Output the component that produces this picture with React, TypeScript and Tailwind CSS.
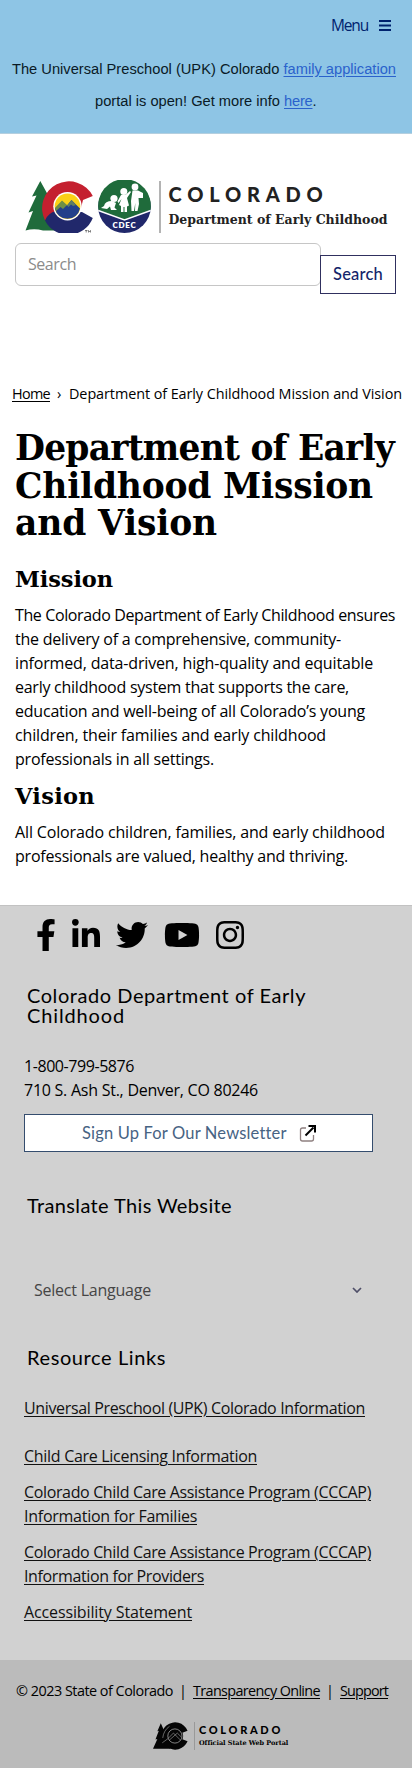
import { useLayoutEffect, useRef, useState } from 'react';
import { FaFacebookF, FaInstagram, FaLinkedinIn, FaTwitter, FaYoutube } from 'react-icons/fa';

/** A line of text whose letter spacing is set so that it fills the given width. */
function Line({ text, width, className = '' }: { text: string; width: number; className?: string }) {
  const ref = useRef<HTMLSpanElement>(null);
  const [spacing, setSpacing] = useState(0);
  useLayoutEffect(() => {
    const el = ref.current;
    if (el) setSpacing((width - el.getBoundingClientRect().width) / text.length);
  }, []);
  return (
    <span ref={ref} className={`inline-block whitespace-pre ${className}`} style={{ letterSpacing: `${spacing}px` }}>
      {text}
    </span>
  );
}

function Paragraph({ lines }: { lines: [string, number][] }) {
  return (
    <p className="flex flex-col items-start text-base leading-6">
      {lines.map(([text, width]) => (
        <Line key={text} text={text} width={width} />
      ))}
    </p>
  );
}

function FooterLink({ lines }: { lines: [string, number][] }) {
  return (
    <a href="#" className="flex flex-col items-start leading-6 text-[#111]">
      {lines.map(([text, width]) => (
        <Line key={text} text={text} width={width} className="underline decoration-1 underline-offset-[1.5px]" />
      ))}
    </a>
  );
}

function ColoradoLogo() {
  return (
    <svg viewBox="25 10 131 53" className="h-[53px] w-[131px] shrink-0">
      <path
        d="M40.300 11 L32 26.500 L36.500 25.500 L28.500 42.500 L33 41 L25.500 60.500 Q34 58 43 60.500 L56 60.500 L56 30 L48 25 Z"
        fill="#1f6b3b"
      />
      <path d="M92.800 26 A26.200 26.200 0 1 0 45 50.400 L58 46 L81 38 L83 30 Z" fill="#c4202f" />
      <path d="M45 50.400 A26.200 26.200 0 0 0 92.800 48 L82 42 L66 42 L56 41 Q48 43 45 50.400Z" fill="#21286b" />
      <circle cx="67.500" cy="36.300" r="14.200" fill="#fff" />
      <circle cx="67.500" cy="36.300" r="12.800" fill="#fbd116" />
      <path d="M54.900 38.500 L62 31.500 L67 35.500 L71.500 30 L80 38.500 A12.800 12.800 0 0 1 54.900 38.500Z" fill="#23408a" />
      <path d="M55 38 L62 30.500 L67 35 L63 39 L60.500 37 L56 41Z" fill="#6f8f45" />
      <path d="M67 35.500 L71.500 30 L76 35 L73 36 L71 34.500 L68.500 37Z" fill="#5f7d62" />
      <path d="M85 60.500 h2.500 M86.200 60.500 v2 M88.500 62.500 v-2 l1 1.200 l1-1.200 v2" stroke="#333" strokeWidth=".6" fill="none" />
      <circle cx="124.500" cy="36.700" r="26.300" fill="#21286b" />
      <path d="M98.600 40 A26.300 26.300 0 1 1 150.400 40 L124.500 49.500Z" fill="#1f6b3b" />
      <path d="M98.300 40.500 L124.500 50 L150.700 40.500" stroke="#fff" strokeWidth="1.400" fill="none" />
      <g fill="#fff">
        <circle cx="114" cy="28.500" r="3.600" />
        <path d="M112 31 Q105 31 104 36 L101 38 L107 39 L110 36.500 L111 40 H117 L114.500 37.500 L116 33Z" />
        <circle cx="123.800" cy="21.500" r="3.500" />
        <path d="M121 25 L126 24.500 L130 21 L131 22 L127 28 L129 35.500 L127 36.500 L127 42 H124.500 V37 H123.500 V42 H121 V36 L119 35 L121.500 29 L118.500 33 L117.500 31.500Z" />
        <circle cx="135" cy="17" r="3.400" />
        <path d="M132.500 20.500 H138 L143 23 V28 H138.500 L139 34 L137.500 41 H135 L135.300 33 L134 41 H131.500 L131 31Z" />
      </g>
      <text
        x="124.500" y="58" textAnchor="middle" fontSize="8" fontWeight="800" letterSpacing=".7" fill="#fff"
        className="font-['Lato',sans-serif]"
      >
        CDEC
      </text>
    </svg>
  );
}

function PortalLogo() {
  return (
    <svg viewBox="0 0 38 28" className="h-7 w-[37px] shrink-0">
      <path d="M8 1 L4.500 9 L6 8.500 L2.500 17.500 L4.500 17 L0 27 H18 V12 L13 12Z" fill="#050505" />
      <path d="M35.500 8.500 A14 14 0 1 0 35.500 19.500 L29.500 17 A7.500 7.500 0 1 1 29.500 11Z" fill="#050505" />
      <circle cx="22.500" cy="14" r="8.500" fill="#050505" />
      <circle cx="22.500" cy="14" r="7.300" fill="none" stroke="#bcbcbc" strokeWidth=".7" />
      <path d="M10 16 Q11 8 17 4 M9.500 21 L15 17 L21 11 L28 18 M17 18 L25 11 L29 15" fill="none" stroke="#aaa" strokeWidth=".6" />
    </svg>
  );
}

export default function App() {
  return (
    <div className="w-[412px] bg-white font-['Open_Sans','Noto_Sans',sans-serif] text-black">
      <header className="h-[134px] border-b border-[#b4cfdf] bg-[#8ec5e5] pt-[13px]">
        <button className="ml-auto mr-[21px] flex h-6 items-center gap-[11px] text-[15.5px] leading-6 text-[#00226e]">
          <Line text="Menu" width={37} />
          <svg viewBox="0 0 12 11" className="h-[11px] w-3">
            <path d="M0 1h12M0 5.500h12M0 10h12" stroke="#00226e" strokeWidth="1.800" />
          </svg>
        </button>
        <div className="mt-4 pl-3 font-['Liberation_Sans',Arial,sans-serif] text-[14.67px] leading-8 text-[#0a1a26]">
          <div className="flex">
            <Line text="The Universal Preschool (UPK) Colorado " width={271.5} />
            <a href="#">
              <Line text="family application" width={112.5} className="text-[#2a62cc] underline underline-offset-2" />
            </a>
          </div>
          <div className="flex pl-[83px]">
            <Line text="portal is open! Get more info " width={189} />
            <a href="#">
              <Line text="here" width={28.5} className="text-[#2a62cc] underline underline-offset-2" />
            </a>
            <span>.</span>
          </div>
        </div>
      </header>

      <section className="h-[248px] pt-[46px]">
        <div className="flex h-[54px] items-start pl-[25px]">
          <ColoradoLogo />
          <div className="ml-[3px] mt-px h-[52px] w-[1.500px] bg-[#b3b3b3]" />
          <div className="ml-[8px] flex flex-col items-start text-[#222]">
            <Line
              text="COLORADO"
              width={160}
              className="h-7 font-['Lato',sans-serif] text-[20px] font-black leading-7"
            />
            <Line
              text="Department of Early Childhood"
              width={219}
              className="mt-[2px] h-5 font-['DejaVu_Serif',serif] text-[12.5px] font-bold leading-5"
            />
          </div>
        </div>
        <form className="mt-[9px] flex items-start pl-[15px] font-['Lato',sans-serif]">
          <div className="h-[43px] w-[306px] rounded-md border-[1.500px] border-[#c6c6c6] pl-[12px] font-['Open_Sans',sans-serif] text-base leading-[40px] text-[#8b8b8b]">
            <Line text="Search" width={48} />
          </div>
          <button
            type="button"
            className="mt-3 -ml-px flex h-[39px] w-[76px] items-center justify-center border border-[#30305f] text-[16.5px] font-medium text-[#14246a]"
          >
            <Line text="Search" width={50} />
          </button>
        </form>
      </section>

      <main className="h-[523px]">
        <nav className="flex pl-3 text-[14.4px] leading-6">
          <a href="#">
            <Line text="Home" width={38} className="underline underline-offset-2" />
          </a>
          <span className="w-[19px] pl-[7px]">›</span>
          <Line text="Department of Early Childhood Mission and Vision" width={333} />
        </nav>
        <div className="pl-[15px]">
          <h1 className="mt-6 flex flex-col items-start font-['DejaVu_Serif',serif] text-[34.5px] font-bold leading-[37.500px]">
            <Line text="Department of Early" width={379} />
            <Line text="Childhood Mission" width={358} />
            <Line text="and Vision" width={202} />
          </h1>
          <h2 className="mt-[24.500px] h-6 font-['DejaVu_Serif',serif] text-[22.5px] font-bold leading-6">
            <Line text="Mission" width={98} />
          </h2>
          <div className="mt-3">
            <Paragraph
              lines={[
                ['The Colorado Department of Early Childhood ensures', 380],
                ['the delivery of a comprehensive, community-', 326],
                ['informed, data-driven, high-quality and equitable', 358],
                ['early childhood system that supports the care,', 334],
                ['education and well-being of all Colorado’s young', 350],
                ['children, their families and early childhood', 311],
                ['professionals in all settings.', 199],
              ]}
            />
          </div>
          <h2 className="mt-[13px] h-6 font-['DejaVu_Serif',serif] text-[22.5px] font-bold leading-6">
            <Line text="Vision" width={80} />
          </h2>
          <div className="mt-3">
            <Paragraph
              lines={[
                ['All Colorado children, families, and early childhood', 370],
                ['professionals are valued, healthy and thriving.', 333],
              ]}
            />
          </div>
        </div>
      </main>

      <footer>
        <div className="h-[755px] border-t border-[#c2c2c2] bg-[#d1d1d1] pl-6 pt-[13px]">
          <div className="flex gap-4 pl-3">
            <FaFacebookF className="h-8 w-5" />
            <FaLinkedinIn className="h-8 w-7" />
            <FaTwitter className="h-8 w-8" />
            <FaYoutube className="h-8 w-9" />
            <FaInstagram className="h-8 w-7" />
          </div>
          <h3 className="mt-[34px] flex flex-col items-start pl-[3px] font-['Lato',sans-serif] text-[20px] leading-5">
            <Line text="Colorado Department of Early" width={279} />
            <Line text="Childhood" width={98} />
          </h3>
          <div className="mt-[29px] flex flex-col items-start leading-6">
            <Line text="1-800-799-5876" width={110} />
            <Line text="710 S. Ash St., Denver, CO 80246" width={234} />
          </div>
          <a
            href="#"
            className="mt-3 flex h-[38px] w-[349px] items-center border border-[#354d6e] bg-white pl-[57px] font-['Lato',sans-serif] text-[16.5px] text-[#476383]"
          >
            <Line text="Sign Up For Our Newsletter" width={204} />
            <svg viewBox="0 0 17 17" className="ml-[12px] h-[17px] w-[17px]" fill="none">
              <path d="M7 3H3.500Q1.500 3 1.500 5V14Q1.500 16 3.500 16H12.500Q14.500 16 14.500 14V10" stroke="#8f8080" strokeWidth="1.300" />
              <path d="M6.500 10.500L14.500 2.500" stroke="#000" strokeWidth="2" />
              <path d="M9.500 1H16V7.500" stroke="#000" strokeWidth="2" />
            </svg>
          </a>
          <h3 className="mt-[43px] h-5 pl-[3px] font-['Lato',sans-serif] text-[20px] leading-5">
            <Line text="Translate This Website" width={205} />
          </h3>
          <div className="mt-[63px] flex h-6 w-[338px] items-center justify-between pl-[10px] leading-6 text-[#454545]">
            <Line text="Select Language" width={117} />
            <svg viewBox="0 0 10 6" className="h-1.5 w-[10px]">
              <path d="M1 1l4 4l4-4" fill="none" stroke="#4f4f68" strokeWidth="1.700" />
            </svg>
          </div>
          <h3 className="mt-[45px] h-5 pl-[3px] font-['Lato',sans-serif] text-[20px] leading-5">
            <Line text="Resource Links" width={139} />
          </h3>
          <div className="mt-[29px] flex flex-col gap-3">
            <div className="mb-3">
              <FooterLink lines={[['Universal Preschool (UPK) Colorado Information', 341]]} />
            </div>
            <FooterLink lines={[['Child Care Licensing Information', 233]]} />
            <FooterLink
              lines={[
                ['Colorado Child Care Assistance Program (CCCAP)', 347],
                ['Information for Families', 173],
              ]}
            />
            <FooterLink
              lines={[
                ['Colorado Child Care Assistance Program (CCCAP)', 347],
                ['Information for Providers', 180],
              ]}
            />
            <FooterLink lines={[['Accessibility Statement', 168]]} />
          </div>
        </div>
        <div className="h-[108px] bg-[#bbbbbb] pt-[19px]">
          <div className="flex pl-4 text-[14.4px] leading-6">
            <Line text="© 2023 State of Colorado" width={157} />
            <span className="w-5 text-center">|</span>
            <a href="#">
              <Line text="Transparency Online" width={127} className="underline underline-offset-2" />
            </a>
            <span className="w-5 text-center">|</span>
            <a href="#">
              <Line text="Support" width={48} className="underline underline-offset-2" />
            </a>
          </div>
          <div className="mt-[19px] flex pl-[153px]">
            <PortalLogo />
            <div className="ml-1 h-7 w-px bg-[#999]" />
            <div className="ml-1 flex flex-col items-start">
              <Line text="COLORADO" width={84} className="mt-[2px] h-3 font-['Lato',sans-serif] text-[11px] font-black leading-3" />
              <Line
                text="Official State Web Portal"
                width={89}
                className="mt-[2px] h-[10px] font-['DejaVu_Serif',serif] text-[6.5px] font-bold leading-[10px]"
              />
            </div>
          </div>
        </div>
      </footer>
    </div>
  );
}
